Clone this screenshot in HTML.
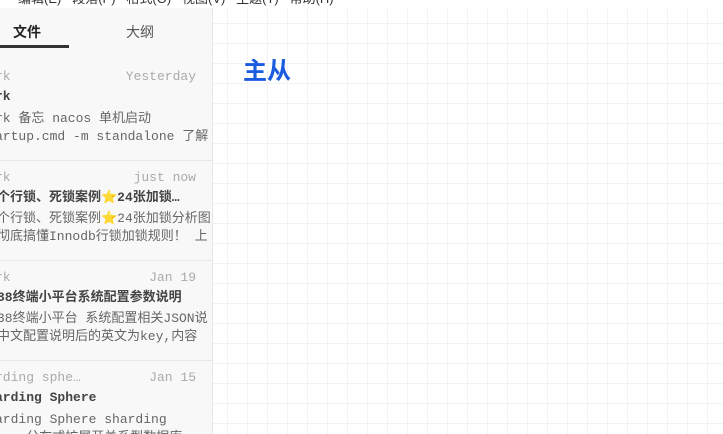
<!DOCTYPE html><html><head><meta charset="utf-8"><style>
html,body{margin:0;width:723px;height:434px;overflow:hidden}
body{position:relative;background:#fff;font-family:"Liberation Sans","Noto Sans CJK SC",sans-serif}
.menu{position:absolute;top:-12px;left:0;height:16px;font-size:13px;color:#333;white-space:nowrap}
.side{position:absolute;left:0;top:8px;width:212px;height:426px;background:#f8f8f8;border-right:1px solid #e6e6e6;overflow:hidden}
.tab{position:absolute;top:14px;font-size:14px}
.ul{position:absolute;left:0;top:37px;width:69px;height:3px;background:#333}
.it{position:absolute;left:0;width:212px;height:100px;border-top:1px solid #e8e8e8}
.m{font-family:"Liberation Mono","Noto Sans CJK SC",monospace;white-space:nowrap;position:absolute;font-size:13px;line-height:16px}
.g{color:#aaa}.t{color:#444;font-weight:bold}.p{color:#666}
.main{position:absolute;left:213px;top:8px;width:510px;height:426px;background-image:linear-gradient(#f3f3f3 1px,transparent 1px),linear-gradient(90deg,#f3f3f3 1px,transparent 1px);background-size:20px 20px;background-position:14px 15px}
h1{position:absolute;left:243px;top:56px;margin:0;font-size:24px;line-height:32px;color:#1a5be0;font-weight:bold}
</style></head><body>
<div class="menu">&nbsp;&nbsp;&nbsp;&nbsp;&nbsp;编辑(E)&nbsp;&nbsp;&nbsp;段落(P)&nbsp;&nbsp;&nbsp;格式(O)&nbsp;&nbsp;&nbsp;视图(V)&nbsp;&nbsp;&nbsp;主题(T)&nbsp;&nbsp;&nbsp;帮助(H)</div>
<div class="main"></div>
<div class="side">
<div class="tab" style="left:13px;font-weight:bold;color:#222">文件</div>
<div class="tab" style="left:126px;color:#555">大纲</div>
<div class="ul"></div>
<div class="it" style="top:52px;border-top:none">
<div class="m g" style="left:-5px;top:9px">rk</div><div class="m g" style="right:16px;top:9px">Yesterday</div>
<div class="m t" style="left:-5px;top:29px">rk</div>
<div class="m p" style="left:-5px;top:51px">rk 备忘 nacos 单机启动</div>
<div class="m p" style="left:-5px;top:69px">artup.cmd -m standalone 了解</div></div>
<div class="it" style="top:152px">
<div class="m g" style="left:-5px;top:9px">rk</div><div class="m g" style="right:16px;top:9px">just now</div>
<div class="m t" style="left:-3px;top:29px">个行锁、死锁案例⭐24张加锁…</div>
<div class="m p" style="left:-3px;top:50px">个行锁、死锁案例⭐24张加锁分析图</div>
<div class="m p" style="left:-3px;top:68px">彻底搞懂Innodb行锁加锁规则！ 上</div></div>
<div class="it" style="top:252px">
<div class="m g" style="left:-5px;top:9px">rk</div><div class="m g" style="right:16px;top:9px">Jan 19</div>
<div class="m t" style="left:-3px;top:29px">38终端小平台系统配置参数说明</div>
<div class="m p" style="left:-3px;top:50px">38终端小平台 系统配置相关JSON说</div>
<div class="m p" style="left:-3px;top:68px">中文配置说明后的英文为key,内容</div></div>
<div class="it" style="top:352px">
<div class="m g" style="left:-5px;top:9px">rding sphe…</div><div class="m g" style="right:16px;top:9px">Jan 15</div>
<div class="m t" style="left:-5px;top:29px">arding Sphere</div>
<div class="m p" style="left:-5px;top:51px">arding Sphere sharding</div>
<div class="m p" style="left:-5px;top:69px">ere 分布式扩展开关系型数据库</div></div>
</div>
<h1>主从</h1>
</body></html>
